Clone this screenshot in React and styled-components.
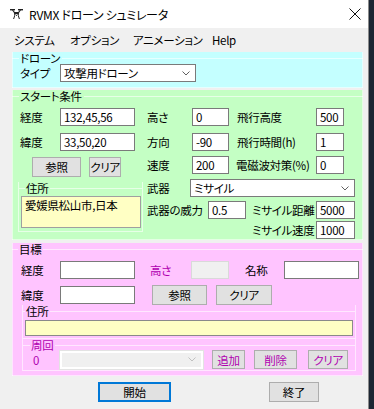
import styled, { createGlobalStyle } from 'styled-components';

const font = `"Noto Sans CJK JP", "Noto Sans", sans-serif`;
const purple = '#b000b0';

const GlobalStyle = createGlobalStyle`
  html, body { margin: 0; padding: 0; background: #f0f0f0; }
  body {
    font-family: ${font};
    font-size: 11.5px;
    line-height: 12px;
    letter-spacing: -0.3px;
    color: #000;
    font-feature-settings: "palt" 1;
  }
  * { box-sizing: border-box; }
`;

const Screen = styled.div`
  display: flex;
  width: 374px;
  height: 409px;
  overflow: hidden;
`;

const Window = styled.div`
  width: 369px;
  flex: none;
  display: flex;
  flex-direction: column;
  background: #f0f0f0;
  border-right: 1px solid #8c8c8c;
`;

const Desktop = styled.div`
  flex: 1;
  background: #1c2633;
`;

const TitleBar = styled.div`
  height: 28px;
  background: #fff;
  display: flex;
  align-items: center;
  padding: 0 7px 0 10px;
  gap: 6px;
`;

const Title = styled.span`
  flex: 1;
  padding-top: 1px;
  font-size: 12px;
`;

const MenuBar = styled.div`
  height: 24px;
  display: flex;
  align-items: center;
  padding-left: 14px;
`;

const MenuItem = styled.span`
  width: ${p => p.$w}px;
  flex: none;
  white-space: nowrap;
`;

const Content = styled.div`
  padding-left: 12px;
`;

const Panel = styled.div`
  width: 351px;
  background: ${p => p.$bg};
  margin-top: ${p => p.$mt || 0}px;
  padding-bottom: ${p => p.$pb || 0}px;
  box-shadow: inset 1px 0 rgba(255, 255, 255, 0.55), inset -1px 0 rgba(255, 255, 255, 0.55),
    inset 0 -1px rgba(255, 255, 255, 0.55);
`;

const Legend = styled.div`
  display: flex;
  align-items: center;
  height: 12px;
  margin-top: ${p => p.$mt || 0}px;
  color: ${p => p.$color || '#000'};
  white-space: nowrap;
  &::before {
    content: '';
    width: ${p => p.$indent || 7}px;
    border-top: 1px solid rgba(255, 255, 255, 0.6);
  }
  &::after {
    content: '';
    flex: 1;
    border-top: 1px solid rgba(255, 255, 255, 0.6);
  }
  span {
    padding: 0 2px 0 1px;
  }
`;

const Group = styled.div`
  width: ${p => p.$w}px;
  margin-left: ${p => p.$ml || 0}px;
  margin-top: ${p => p.$mt || 0}px;
  padding-bottom: ${p => p.$pb || 0}px;
  border: 1px solid rgba(255, 255, 255, 0.6);
  border-top: none;
`;

const Columns = styled.div`
  display: flex;
`;

const Column = styled.div`
  width: ${p => p.$w}px;
  flex: none;
`;

const Row = styled.div`
  display: flex;
  align-items: center;
  height: ${p => p.$h || 18}px;
  margin-top: ${p => p.$mt || 0}px;
  padding-left: ${p => p.$pl || 0}px;
`;

const Label = styled.span`
  width: ${p => p.$w}px;
  flex: none;
  margin-left: ${p => p.$ml || 0}px;
  color: ${p => p.$color || '#000'};
  white-space: nowrap;
`;

const Field = styled.input`
  width: ${p => p.$w}px;
  height: ${p => p.$h || 18}px;
  flex: none;
  margin: ${p => p.$mt || 0}px 0 0 ${p => p.$ml || 0}px;
  padding: 0 0 0 3px;
  border: 1px solid ${p => p.$border || '#7a7a7a'};
  background: ${p => p.$bg || '#fff'};
  font: 11.5px/16px ${font};
  letter-spacing: -0.3px;
  font-feature-settings: "palt" 1;
  color: #000;
  outline: none;
  white-space: nowrap;
`;

const Combo = styled.div`
  width: ${p => p.$w}px;
  height: 18px;
  flex: none;
  margin-left: ${p => p.$ml || 0}px;
  display: flex;
  align-items: center;
  justify-content: space-between;
  padding: 0 5px 0 3px;
  border: ${p => (p.$disabled ? '2px solid #fff' : '1px solid #7a7a7a')};
  background: ${p => (p.$disabled ? '#f0f0f0' : '#fff')};
  outline: ${p => (p.$disabled ? '1px solid #e3e3e3' : 'none')};
  white-space: nowrap;
`;

const Btn = styled.button`
  width: ${p => p.$w}px;
  height: ${p => p.$h || 20}px;
  flex: none;
  margin-left: ${p => p.$ml || 0}px;
  padding: 0;
  border: ${p => (p.$focus ? '2px solid #0078d7' : '1px solid #adadad')};
  background: #e1e1e1;
  color: ${p => p.$color || '#000'};
  font: 11.5px/12px ${font};
  letter-spacing: -0.3px;
  font-feature-settings: "palt" 1;
  white-space: nowrap;
`;

const BottomBar = styled.div`
  display: flex;
  margin-top: 6px;
`;

function Chevron({ color = '#606060' }) {
  return (
    <svg width="8" height="5" viewBox="0 0 8 5">
      <polyline points="0.5,0.5 4,4 7.5,0.5" fill="none" stroke={color} strokeWidth="1" />
    </svg>
  );
}

function DroneIcon() {
  return (
    <svg width="13" height="12" viewBox="0 0 13 12">
      <rect x="0" y="1" width="5" height="1.4" fill="#222" />
      <rect x="8" y="1" width="5" height="1.4" fill="#222" />
      <path d="M2.5 2 L4.5 4.5 L8.5 4.5 L10.5 2" fill="none" stroke="#222" strokeWidth="1.2" />
      <path d="M3.8 4 H9.2 L8.6 8 H4.4 Z" fill="#222" />
      <circle cx="6.5" cy="7.3" r="1.3" fill="#fff" />
      <circle cx="6.5" cy="7.3" r="0.6" fill="#222" />
      <path d="M4.6 8 L3.6 11 M8.4 8 L9.4 11" stroke="#222" strokeWidth="1" />
    </svg>
  );
}

function CloseIcon() {
  return (
    <svg width="12" height="12" viewBox="0 0 12 12">
      <path d="M0.5 0.5 L11.5 11.5 M11.5 0.5 L0.5 11.5" stroke="#111" strokeWidth="1" />
    </svg>
  );
}

export default function App() {
  return (
    <Screen>
      <GlobalStyle />
      <Window>
        <TitleBar>
          <DroneIcon />
          <Title>RVMX ドローン シュミレータ</Title>
          <CloseIcon />
        </TitleBar>
        <MenuBar>
          <MenuItem $w={56}>システム</MenuItem>
          <MenuItem $w={63}>オプション</MenuItem>
          <MenuItem $w={79}>アニメーション</MenuItem>
          <MenuItem $w={40}>Help</MenuItem>
        </MenuBar>

        <Content>
          <Panel $bg="#c4ffff" $pb={6}>
            <Legend><span>ドローン</span></Legend>
            <Row $pl={8}>
              <Label $w={40}>タイプ</Label>
              <Combo $w={136}>
                <span>攻撃用ドローン</span>
                <Chevron />
              </Combo>
            </Row>
          </Panel>

          <Panel $bg="#c4ffc4" $mt={2} $pb={1}>
            <Legend $mt={2}><span>スタート条件</span></Legend>
            <Columns>
              <Column $w={135}>
                <Row $mt={6} $pl={8}>
                  <Label $w={40}>経度</Label>
                  <Field $w={75} defaultValue="132,45,56" />
                </Row>
                <Row $mt={7} $pl={8}>
                  <Label $w={40}>緯度</Label>
                  <Field $w={75} defaultValue="33,50,20" />
                </Row>
                <Row $mt={6} $h={20} $pl={20}>
                  <Btn $w={49}>参照</Btn>
                  <Btn $w={32} $ml={8}>クリア</Btn>
                </Row>
                <Group $w={125} $ml={6} $mt={5} $pb={3}>
                  <Legend $indent={6}><span>住所</span></Legend>
                  <Field as="div" $w={120} $h={32} $mt={2} $ml={2} $bg="#ffffc4" $border="#a0a0a0">
                    愛媛県松山市,日本
                  </Field>
                </Group>
              </Column>

              <Column $w={216}>
                <Row $mt={6}>
                  <Label $w={45}>高さ</Label>
                  <Field $w={37} defaultValue="0" />
                  <Label $w={79} $ml={8}>飛行高度</Label>
                  <Field $w={28} defaultValue="500" />
                </Row>
                <Row $mt={7}>
                  <Label $w={45}>方向</Label>
                  <Field $w={37} defaultValue="-90" />
                  <Label $w={79} $ml={8}>飛行時間(h)</Label>
                  <Field $w={28} defaultValue="1" />
                </Row>
                <Row $mt={5}>
                  <Label $w={45}>速度</Label>
                  <Field $w={37} defaultValue="200" />
                  <Label $w={80} $ml={7}>電磁波対策(%)</Label>
                  <Field $w={28} defaultValue="0" />
                </Row>
                <Row $mt={5}>
                  <Label $w={43}>武器</Label>
                  <Combo $w={165}>
                    <span>ミサイル</span>
                    <Chevron />
                  </Combo>
                </Row>
                <Row $mt={4}>
                  <Label $w={61}>武器の威力</Label>
                  <Field $w={38} defaultValue="0.5" />
                  <Label $w={64} $ml={6}>ミサイル距離</Label>
                  <Field $w={39} defaultValue="5000" />
                </Row>
                <Row $mt={2} $pl={105}>
                  <Label $w={64}>ミサイル速度</Label>
                  <Field $w={39} defaultValue="1000" />
                </Row>
              </Column>
            </Columns>
          </Panel>

          <Panel $bg="#ffc4ff" $mt={3} $pb={5}>
            <Legend $mt={1} $indent={6}><span>目標</span></Legend>
            <Row $mt={6} $pl={9}>
              <Label $w={39}>経度</Label>
              <Field $w={75} />
              <Label $w={41} $ml={15} $color={purple}>高さ</Label>
              <Field $w={38} $bg="#f0f0f0" $border="#d9d9d9" disabled />
              <Label $w={39} $ml={16}>名称</Label>
              <Field $w={75} />
            </Row>
            <Row $mt={7} $pl={9}>
              <Label $w={39}>緯度</Label>
              <Field $w={75} />
              <Btn $w={55} $ml={17}>参照</Btn>
              <Btn $w={56} $ml={9}>クリア</Btn>
            </Row>
            <Group $w={334} $ml={10} $mt={1} $pb={2}>
              <Legend $indent={2}><span>住所</span></Legend>
              <Field $w={328} $h={16} $mt={3} $ml={2} $bg="#ffffc4" $border="#8a8a8a" />
            </Group>
            <Group $w={334} $ml={10} $pb={1}>
              <Legend $indent={7} $color={purple}><span>周回</span></Legend>
              <Row $mt={-1} $h={19} $pl={10}>
                <Label $w={27} $color={purple}>0</Label>
                <Combo $w={143} $disabled>
                  <span />
                  <Chevron color="#c0c0c0" />
                </Combo>
                <Btn $w={33} $h={19} $ml={9} $color={purple}>追加</Btn>
                <Btn $w={43} $h={19} $ml={9} $color={purple}>削除</Btn>
                <Btn $w={40} $h={19} $ml={11} $color={purple}>クリア</Btn>
              </Row>
            </Group>
          </Panel>

          <BottomBar>
            <Btn $w={73} $ml={86} $focus>開始</Btn>
            <Btn $w={50} $ml={98}>終了</Btn>
          </BottomBar>
        </Content>
      </Window>
      <Desktop />
    </Screen>
  );
}
